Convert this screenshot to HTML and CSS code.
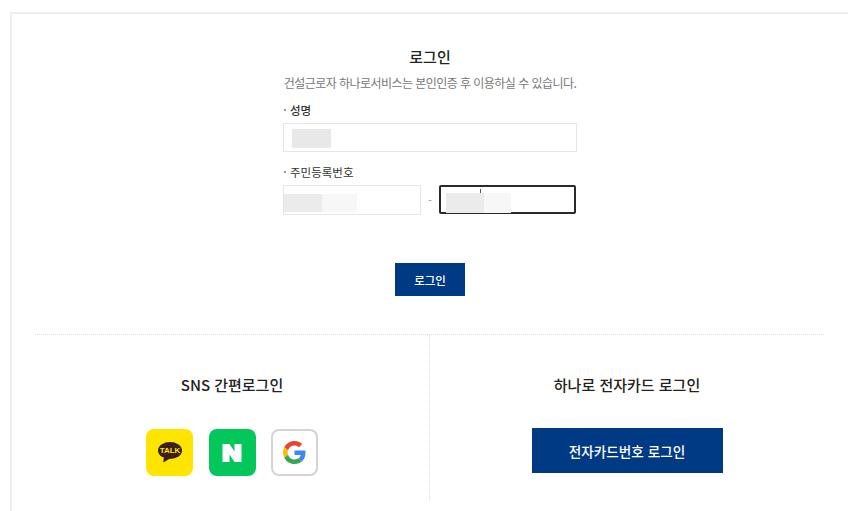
FILE: index.html
```html
<!DOCTYPE html>
<html lang="ko">
<head>
    <meta charset="UTF-8">
    <meta name="viewport" content="width=device-width, initial-scale=1.0">
    <title>로그인</title>
    <link rel="stylesheet" href="styles.css">
</head>
<body>
    <div class="login-box">
        <h1>로그인</h1>
        <p class="desc">건설근로자 하나로서비스는 본인인증 후 이용하실 수 있습니다.</p>

        <div class="login-form">
            <div class="form-group">
                <label class="name-label" for="name">성명</label>
                <div class="input-box name-box">
                    <span class="mask mask-name"></span>
                </div>
            </div>
            <div class="form-group">
                <label for="rrn">주민등록번호</label>
                <div class="rrn-row">
                    <div class="input-box rrn-box">
                        <span class="mask mask-dark"></span><span class="mask mask-light"></span>
                    </div>
                    <span class="dash">-</span>
                    <div class="input-box rrn-box rrn-focus">
                        <span class="caret"></span>
                        <span class="mask mask-dark"></span><span class="mask mask-light"></span>
                    </div>
                </div>
            </div>
        </div>

        <button class="btn-login">로그인</button>

        <div class="other-login">
            <div class="other-col">
                <h2>SNS 간편로그인</h2>
                <div class="sns-list">
                    <a class="sns sns-kakao">
                        <svg width="26" height="21" viewBox="0 0 26 21">
                            <ellipse cx="13" cy="8.500" rx="12" ry="8.500" fill="#3c1e1e"/>
                            <path d="M7 14L6.300 20.500 13 16.500z" fill="#3c1e1e"/>
                            <text x="13" y="11.400" class="talk">TALK</text>
                        </svg>
                    </a>
                    <a class="sns sns-naver">
                        <svg width="20" height="20" viewBox="0 0 20 20">
                            <path d="M.5 1h7l5 7.500V1h7v18h-7l-5-7.500V19h-7z" fill="#fff"/>
                        </svg>
                    </a>
                    <a class="sns sns-google">
                        <svg width="23" height="23" viewBox="0 0 48 48">
                            <path fill="#EA4335" d="M24 9.500c3.500 0 6.700 1.200 9.200 3.600l6.900-6.900C35.900 2.400 30.500 0 24 0 14.600 0 6.500 5.400 2.600 13.200l8 6.200C12.500 13.700 17.800 9.500 24 9.500z"/>
                            <path fill="#4285F4" d="M47 24.500c0-1.600-.1-3.100-.4-4.500H24v9h12.900c-.6 3-2.200 5.500-4.700 7.200l7.700 6C44.400 38 47 31.800 47 24.500z"/>
                            <path fill="#FBBC05" d="M10.500 28.600c-.5-1.400-.8-3-.8-4.600s.3-3.200.8-4.600l-8-6.200C.9 16.500 0 20.100 0 24s.9 7.500 2.600 10.800l7.900-6.200z"/>
                            <path fill="#34A853" d="M24 48c6.500 0 11.900-2.100 15.900-5.800l-7.700-6c-2.200 1.500-4.900 2.300-8.200 2.300-6.200 0-11.500-4.200-13.400-9.900l-8 6.200C6.500 42.600 14.600 48 24 48z"/>
                        </svg>
                    </a>
                </div>
            </div>
            <div class="other-col">
                <h2>하나로 전자카드 로그인</h2>
                <button class="btn-card">전자카드번호 로그인</button>
            </div>
        </div>
    </div>
</body>
</html>
```

FILE: styles.css
```css
html, body {
    height: 511px;
    overflow: hidden;
}
body {
    margin: 0;
    padding: 12px 7px 0 10px;
    box-sizing: border-box;
    background-color: #fff;
    font-family: "Noto Sans CJK KR", "Noto Sans", sans-serif;
    color: #222;
}
.login-box {
    height: 499px;
    box-sizing: border-box;
    border-top: 2px solid #eee;
    border-left: 2px solid #eee;
    padding: 33px 23px 0;
    display: flex;
    flex-direction: column;
    align-items: center;
}
h1 {
    margin: 0;
    font-size: 15px;
    line-height: 20px;
    font-weight: 500;
    color: #222;
}
.desc {
    margin: 7px 0 0;
    font-size: 12px;
    line-height: 18px;
    letter-spacing: -0.55px;
    color: #777;
}
.login-form {
    width: 294px;
    margin-top: 9px;
}
.form-group {
    margin-bottom: 11px;
}
label {
    display: block;
    position: relative;
    padding-left: 7px;
    font-size: 11.500px;
    line-height: 18px;
    margin-bottom: 4px;
    color: #333;
}
label::before {
    content: "";
    position: absolute;
    left: 1px;
    top: 8px;
    width: 2px;
    height: 2px;
    background-color: #999;
}
.name-label {
    font-weight: 500;
}
.input-box {
    box-sizing: border-box;
    height: 29px;
    border: 1px solid #e6e6e6;
    background-color: #fff;
    display: flex;
}
.name-box {
    padding: 5px 8px;
}
.mask {
    display: block;
    height: 19px;
}
.mask-name {
    width: 39px;
    background-color: #e8e8e8;
}
.rrn-row {
    display: flex;
    align-items: flex-start;
}
.rrn-box {
    position: relative;
    width: 138px;
    height: 30px;
    padding: 8px 0 1px;
}
.dash {
    width: 18px;
    line-height: 30px;
    text-align: center;
    font-size: 11px;
    color: #999;
}
.rrn-focus {
    width: 137px;
    height: 29px;
    border: 2px solid #2a2a2a;
    border-radius: 2px;
    padding: 6px 0 0 5px;
}
.mask-dark {
    width: 38px;
    height: 18px;
    background-color: #ebebeb;
}
.mask-light {
    width: 35px;
    height: 18px;
    background-color: #f7f7f7;
}
.rrn-focus .mask-dark {
    height: 20px;
}
.rrn-focus .mask-light {
    width: 27px;
    height: 20px;
}
.caret {
    position: absolute;
    left: 39px;
    top: 2px;
    width: 1px;
    height: 4px;
    background-color: #555;
}
button {
    border: none;
    color: #fff;
    background-color: #003a84;
    font-family: inherit;
    font-weight: 500;
    cursor: pointer;
}
.btn-login {
    width: 70px;
    height: 33px;
    margin-top: 37px;
    font-size: 11.500px;
    flex-shrink: 0;
}
.other-login {
    align-self: flex-start;
    width: 789px;
    margin-top: 38px;
    height: 166px;
    border-top: 1px dotted #ddd;
    display: flex;
}
.other-col {
    flex: 1;
    display: flex;
    flex-direction: column;
    align-items: center;
    padding-top: 38px;
}
.other-col + .other-col {
    border-left: 1px dotted #ddd;
}
h2 {
    margin: 0;
    font-size: 15px;
    line-height: 24px;
    font-weight: 500;
    color: #222;
}
.sns-list {
    display: flex;
    gap: 15.500px;
    margin-top: 32px;
}
.sns {
    box-sizing: border-box;
    width: 47px;
    height: 47px;
    border-radius: 8px;
    display: flex;
    align-items: center;
    justify-content: center;
}
.sns-kakao {
    background-color: #fee500;
}
.sns-naver {
    background-color: #03c75a;
}
.sns-google {
    background-color: #fff;
    border: 2px solid #d4d4d4;
}
.talk {
    font-family: "Liberation Sans", sans-serif;
    font-size: 8px;
    font-weight: 700;
    fill: #fee500;
    text-anchor: middle;
}
.btn-card {
    width: 191px;
    height: 45px;
    margin-top: 31px;
    font-size: 13.600px;
}
```
